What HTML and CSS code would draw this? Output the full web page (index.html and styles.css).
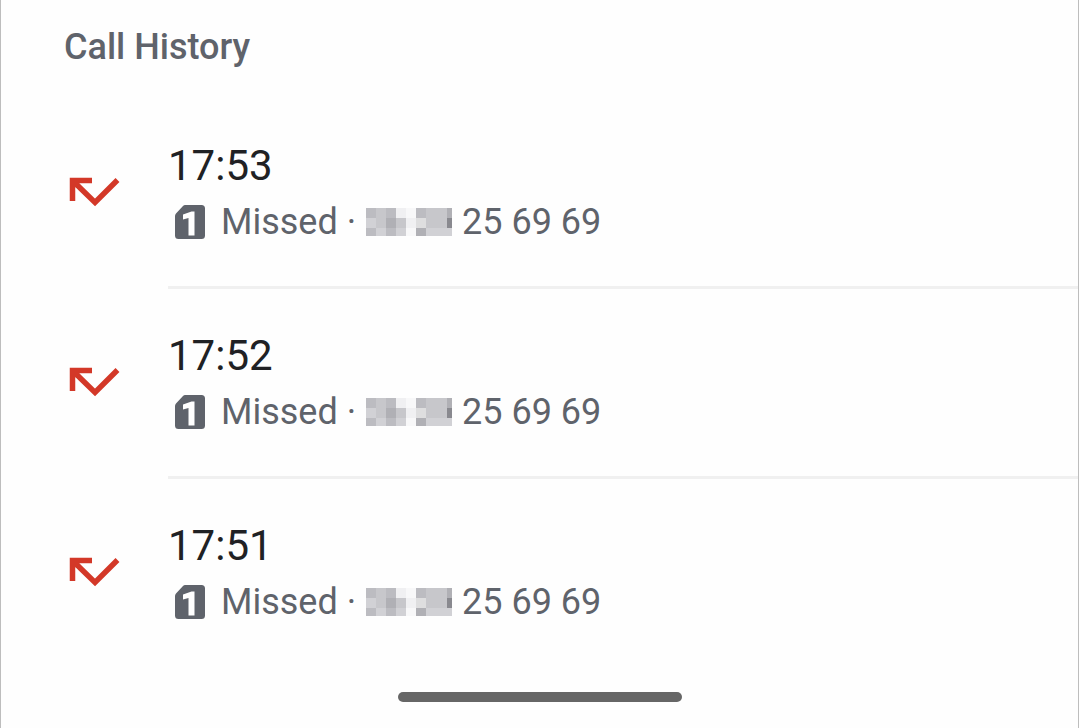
FILE: index.html
```html
<!DOCTYPE html>
<html lang="en">
<head>
<meta charset="utf-8">
<meta name="viewport" content="width=device-width, initial-scale=1">
<title>Call History</title>
<link rel="stylesheet" href="styles.css">
</head>
<body>
<svg class="defs" aria-hidden="true">
  <symbol id="missed" viewBox="0 0 52 32">
    <path d="M4.500 26V5.500H24M5 6L27 27.500L49.500 5" fill="none" stroke="#d33828" stroke-width="5.500"/>
  </symbol>
  <symbol id="sim" viewBox="0 0 30 34">
    <path d="M10 0H26.500Q30 0 30 3.500V30.500Q30 34 26.500 34H3.500Q0 34 0 30.500V11Q0 9.500 1 8.500L8 1Q9 0 10 0Z" fill="#5f636b"/>
    <path d="M8 9.500L16.500 6.500H19.500V30.500H13.500V13L8 14.500Z" fill="#fff"/>
  </symbol>
  <symbol id="masked" viewBox="0 0 86 28">
    <g shape-rendering="crispEdges">
      <path d="M0 0H86V28H0Z" fill="#c7c7cb"/>
      <path d="M0 0H10V10H0ZM20 0H30V10H20ZM50 0H60V10H50ZM0 20H10V28H0ZM20 20H30V28H20Z" fill="#bcbcc1"/>
      <path d="M30 0H40V10H30ZM40 10H50V20H40Z" fill="#f0f0f2"/>
      <path d="M40 0H50V10H40ZM40 20H50V28H40Z" fill="#f8f8f9"/>
      <path d="M0 10H10V20H0ZM10 20H20V28H10ZM30 20H40V28H30ZM60 20H86V28H60Z" fill="#d1d1d5"/>
      <path d="M50 10H60V20H50Z" fill="#dededf"/>
      <path d="M20 10H30V20H20ZM81 0H86V10H81ZM50 20H60V28H50Z" fill="#b0b0b5"/>
      <path d="M81 10H86V20H81Z" fill="#89898f"/>
    </g>
  </symbol>
</svg>
<main class="screen">
  <h1 class="title">Call History</h1>
  <ul class="calls">
    <li class="call">
      <svg class="missed-icon" aria-hidden="true"><use href="#missed"/></svg>
      <div class="details">
        <div class="time">17:53</div>
        <div class="meta"><svg class="sim-icon" aria-hidden="true"><use href="#sim"/></svg><span>Missed ·</span><svg class="masked" aria-hidden="true"><use href="#masked"/></svg><span>25 69 69</span></div>
      </div>
    </li>
    <li class="call">
      <svg class="missed-icon" aria-hidden="true"><use href="#missed"/></svg>
      <div class="details">
        <div class="time">17:52</div>
        <div class="meta"><svg class="sim-icon" aria-hidden="true"><use href="#sim"/></svg><span>Missed ·</span><svg class="masked" aria-hidden="true"><use href="#masked"/></svg><span>25 69 69</span></div>
      </div>
    </li>
    <li class="call">
      <svg class="missed-icon" aria-hidden="true"><use href="#missed"/></svg>
      <div class="details">
        <div class="time">17:51</div>
        <div class="meta"><svg class="sim-icon" aria-hidden="true"><use href="#sim"/></svg><span>Missed ·</span><svg class="masked" aria-hidden="true"><use href="#masked"/></svg><span>25 69 69</span></div>
      </div>
    </li>
  </ul>
  <div class="home-bar"></div>
</main>
</body>
</html>
```
FILE: styles.css
```css
* {
  box-sizing: border-box;
}

body {
  margin: 0;
  background: #fefefe;
  color: #202124;
  font-family: Roboto, sans-serif;
}

.defs {
  display: none;
}

.screen {
  display: flex;
  flex-direction: column;
  min-height: 100vh;
  padding-bottom: 26px;
  border: solid #bdbdbd;
  border-width: 0 1px;
}

.title {
  margin: 0;
  padding: 25px 63px 30px;
  color: #5f636b;
  font-size: 36px;
  font-weight: 500;
  line-height: 44px;
}

.calls {
  margin: 0;
  padding: 0;
  list-style: none;
}

.call {
  display: flex;
  padding-left: 67px;
}

.missed-icon {
  flex: none;
  width: 52px;
  height: 32px;
  margin: 76px 48px 0 0;
}

.details {
  flex: 1;
  padding: 43px 0 42px;
  border-bottom: 3px solid #f0f0f0;
}

.call:last-child .details {
  border-bottom: 0;
}

.time {
  font-size: 42px;
  line-height: 48px;
}

.meta {
  display: flex;
  align-items: center;
  margin-top: 10px;
  padding-left: 7px;
  color: #5f636b;
  font-size: 36px;
  line-height: 44px;
}

.sim-icon {
  width: 30px;
  height: 34px;
  margin-right: 16px;
}

.masked {
  width: 86px;
  height: 28px;
  margin: 0 10px;
}

.home-bar {
  align-self: center;
  width: 284px;
  height: 10px;
  margin-top: auto;
  border-radius: 5px;
  background: #666;
}
```
